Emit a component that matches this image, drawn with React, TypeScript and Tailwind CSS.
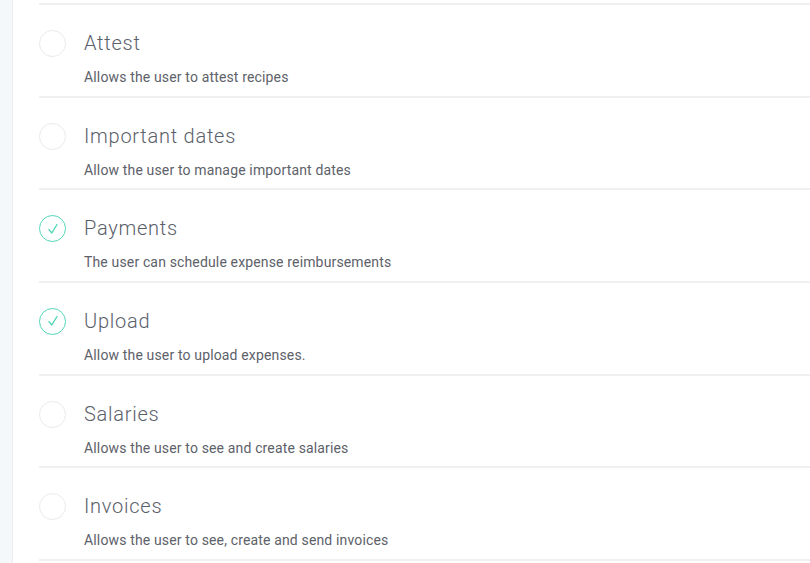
import React from "react";

interface Permission {
    title: string;
    description: string;
    enabled: boolean;
}

const permissions: Permission[] = [
    { title: "Attest", description: "Allows the user to attest recipes", enabled: false },
    { title: "Important dates", description: "Allow the user to manage important dates", enabled: false },
    { title: "Payments", description: "The user can schedule expense reimbursements", enabled: true },
    { title: "Upload", description: "Allow the user to upload expenses.", enabled: true },
    { title: "Salaries", description: "Allows the user to see and create salaries", enabled: false },
    { title: "Invoices", description: "Allows the user to see, create and send invoices", enabled: false },
];

function CheckCircle({ checked }: { checked: boolean }) {
    if (!checked) {
        return <div className="w-[27px] h-[27px] shrink-0 rounded-full border-[1.5px] border-[#e9eaeb] bg-white" />;
    }
    return (
        <div className="w-[27px] h-[27px] shrink-0 rounded-full border-[1.5px] border-[#52d6b8] flex items-center justify-center">
            <svg width="12" height="12" viewBox="0 0 12 12" fill="none">
                <path d="M2 6.6 L4.8 10 L10 1.5" stroke="#52d6b8" strokeWidth="1.4" strokeLinecap="round" strokeLinejoin="round" />
            </svg>
        </div>
    );
}

export default function App() {
    return (
        <div className="flex w-[810px] h-[563px] overflow-hidden bg-white" style={{ fontFamily: "Roboto, 'Noto Sans', sans-serif" }}>
            {/* side strip */}
            <div className="w-[13px] shrink-0 bg-[#f5f8fa] border-r border-[#eceff2]" />

            <div className="flex-1 pl-[26px]">
                <div className="h-[3px]" />
                <ul className="border-t-2 border-[#f0f0f0]">
                    {permissions.map((p) => (
                        <li key={p.title} className="flex border-b-2 border-[#f0f0f0] pt-[25px] pb-[8.67px]">
                            <CheckCircle checked={p.enabled} />
                            <div className="ml-[18px]">
                                <p className="text-[20px] leading-[27px] font-light tracking-[0.75px] text-[#5a606a]">{p.title}</p>
                                <p className="mt-[10px] text-[14px] leading-[20px] tracking-[0.15px] text-[#5d6169]">{p.description}</p>
                            </div>
                        </li>
                    ))}
                </ul>
            </div>
        </div>
    );
}
